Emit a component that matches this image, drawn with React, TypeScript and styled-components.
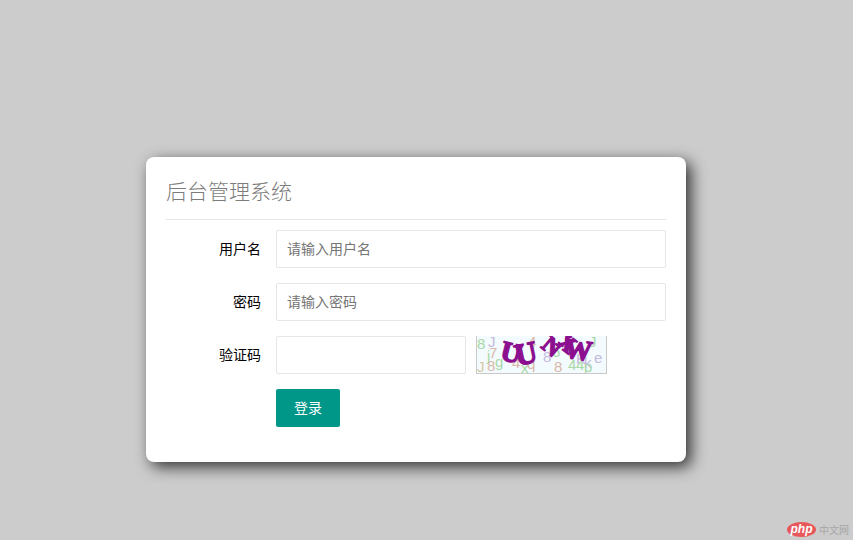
import styled, { createGlobalStyle } from "styled-components";

const GlobalStyle = createGlobalStyle`
  html, body {
    margin: 0;
    height: 100%;
    background: #cccccc;
    font-family: "Noto Sans CJK SC", "Liberation Sans", sans-serif;
    font-size: 14px;
    overflow: hidden;
  }
`;

const Page = styled.div`
  box-sizing: border-box;
  height: 540px;
  padding: 157px 0 0 146px;
`;

const Card = styled.div`
  box-sizing: border-box;
  width: 540px;
  height: 305px;
  padding: 15px 20px;
  background: #fff;
  border-radius: 8px;
  box-shadow: 5px 5px 15px #333;
`;

const Title = styled.h2`
  margin: 0 0 10px;
  height: 47px;
  line-height: 36px;
  font-size: 21px;
  font-weight: 300;
  color: #7c7c7b;
  border-bottom: 1px solid #e6e6e6;
`;

const Form = styled.form`
  display: flex;
  flex-direction: column;
  gap: 15px;
`;

const Row = styled.div`
  display: flex;
  align-items: center;
  height: 38px;
`;

const Label = styled.label`
  width: 95px;
  margin-right: 15px;
  padding-bottom: 3px;
  text-align: right;
  color: #000;
  font-size: 14px;
`;

const Input = styled.input<{ $width?: number }>`
  box-sizing: border-box;
  width: ${(props) => props.$width ?? 390}px;
  height: 38px;
  padding: 0 10px 3px;
  background: #fff;
  border: 1px solid #e6e6e6;
  border-radius: 2px;
  font-family: inherit;
  font-size: 14px;
  outline: none;
  &::placeholder {
    color: #757575;
    opacity: 1;
  }
`;

const Captcha = styled.svg`
  display: block;
  width: 131px;
  height: 38px;
  margin-left: 10px;
  flex: none;
`;

const Submit = styled.button`
  width: 64px;
  height: 38px;
  margin-left: 110px;
  padding: 0 0 3px;
  border: none;
  border-radius: 2px;
  background: #009688;
  color: #fff;
  font-family: inherit;
  font-size: 14px;
`;

const Watermark = styled.div`
  position: absolute;
  right: 4px;
  bottom: 3px;
  display: flex;
  align-items: center;
  gap: 3px;
  color: #a6a6a6;
  font-size: 10px;
`;

const noise: [string, number, number, string][] = [
  ["8", 1, 13, "#a9d8a6"],
  ["J", 12, 11, "#c5b9dd"],
  ["j", 11, 25, "#a9d8a6"],
  ["7", 13, 22, "#d9b8a8"],
  ["g", 19, 31, "#a9d8a6"],
  ["8", 11, 35, "#d9b8a8"],
  ["J", 1, 36, "#d9c8a8"],
  ["4", 36, 32, "#d9b8a8"],
  ["x", 45, 37, "#a9d8a6"],
  ["q", 51, 33, "#d9b8a8"],
  ["4", 52, 11, "#d9b8a8"],
  ["6", 76, 21, "#a9d8a6"],
  ["8", 67, 26, "#c5b9dd"],
  ["8", 78, 36, "#d9b8a8"],
  ["4", 92, 34, "#a9d8a6"],
  ["4", 100, 34, "#a9d8a6"],
  ["K", 100, 28, "#c5b9dd"],
  ["k", 108, 32, "#c5b9dd"],
  ["e", 118, 27, "#c5b9dd"],
  ["J", 113, 11, "#a9d8a6"],
  ["p", 108, 36, "#a9d8a6"],
];

const strong: [string, number, number, number, number][] = [
  ["U", 23, 23, 14, 28],
  ["U", 41, 30, -12, 31],
  ["N", 64, 11, 40, 24],
  ["X", 79, 8, 38, 24],
  ["W", 87, 21, 8, 28],
];

const App = () => {
  return (
    <Page>
      <GlobalStyle />
      <Card>
        <Title>后台管理系统</Title>
        <Form>
          <Row>
            <Label>用户名</Label>
            <Input placeholder="请输入用户名" />
          </Row>
          <Row>
            <Label>密码</Label>
            <Input placeholder="请输入密码" />
          </Row>
          <Row>
            <Label>验证码</Label>
            <Input $width={190} />
            <Captcha viewBox="0 0 131 38">
              <rect width="131" height="38" fill="#f3fbfe" />
              {noise.map(([ch, x, y, color], i) => (
                <text
                  key={i}
                  x={x}
                  y={y}
                  fill={color}
                  fontSize="15"
                  fontFamily="Liberation Sans, sans-serif"
                >
                  {ch}
                </text>
              ))}
              {strong.map(([ch, x, y, rot, size], i) => (
                <text
                  key={i}
                  x={x}
                  y={y}
                  fill="#8b0f8f"
                  stroke="#8b0f8f"
                  strokeWidth="1.4"
                  fontSize={size}
                  fontWeight="700"
                  fontFamily="Liberation Serif, serif"
                  transform={`rotate(${rot} ${x} ${y})`}
                >
                  {ch}
                </text>
              ))}
              <path d="M0 37.5H131M130.5 0V38M0.5 0V38" stroke="#c9c9c9" fill="none" />
            </Captcha>
          </Row>
          <Row>
            <Submit type="button">登录</Submit>
          </Row>
        </Form>
      </Card>
      <Watermark>
        <svg width="29" height="15" viewBox="0 0 29 15">
          <ellipse cx="14.5" cy="7.5" rx="14.5" ry="7.5" fill="#e8585b" />
          <text
            x="14.5"
            y="11"
            fill="#fff"
            fontSize="12"
            fontStyle="italic"
            fontWeight="700"
            textAnchor="middle"
            fontFamily="Liberation Sans, sans-serif"
          >
            php
          </text>
        </svg>
        <span>中文网</span>
      </Watermark>
    </Page>
  );
};

export default App;
